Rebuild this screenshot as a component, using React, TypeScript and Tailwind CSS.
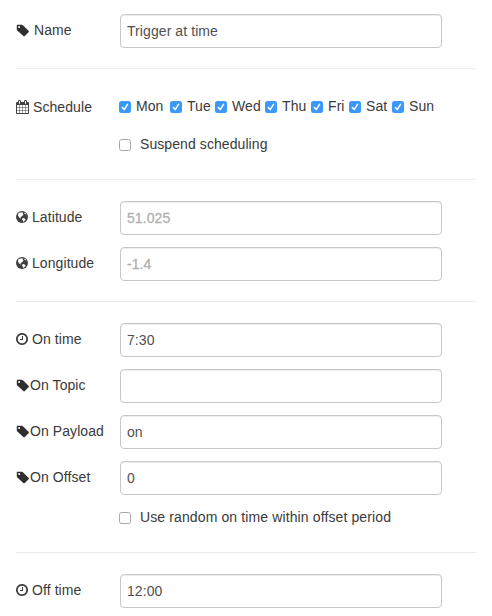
import type { ReactNode } from "react";

function TagIcon() {
  return (
    <svg viewBox="0 0 13 13" className="block h-[13px] w-[13px]" fill="#2f2f2f">
      <path fillRule="evenodd" d="M.8 1.2 1.2.8H6L6.9 1.2 12.8 7.1V8L8.6 12.3H7.6L1.3 6.6.8 5.8ZM3.1 2.1a1 1 0 1 0 0 2 1 1 0 0 0 0-2Z" />
    </svg>
  );
}

function CalendarIcon() {
  return (
    <svg viewBox="64 0 1664 1792" className="block h-[14px] w-[13px]" fill="#444">
      <path d="M192 1664h288v-288h-288v288zm352 0h320v-288h-320v288zm-352-352h288v-320h-288v320zm352 0h320v-320h-320v320zm-352-384h288v-288h-288v288zm736 736h320v-288h-320v288zm-384-736h320v-288h-320v288zm768 736h288v-288h-288v288zm-384-352h320v-320h-320v320zm-352-864v-288q0-13-9.5-22.5t-22.5-9.5h-64q-13 0-22.5 9.5t-9.5 22.5v288q0 13 9.5 22.5t22.5 9.5h64q13 0 22.5-9.5t9.5-22.5zm736 864h288v-320h-288v320zm-384-384h320v-288h-320v288zm384 0h288v-288h-288v288zm32-480v-288q0-13-9.5-22.5t-22.5-9.5h-64q-13 0-22.5 9.5t-9.5 22.5v288q0 13 9.5 22.5t22.5 9.5h64q13 0 22.5-9.5t9.5-22.5zm384-64v1280q0 52-38 90t-90 38h-1408q-52 0-90-38t-38-90v-1280q0-52 38-90t90-38h128v-96q0-66 47-113t113-47h64q66 0 113 47t47 113v96h384v-96q0-66 47-113t113-47h64q66 0 113 47t47 113v96h128q52 0 90 38t38 90z" />
    </svg>
  );
}

function GlobeIcon() {
  return (
    <svg viewBox="0 0 12 12" className="block h-3 w-3">
      <circle cx="6" cy="6" r="6" fill="#404040" />
      <path fill="#fff" d="M2.2 2.6 4 1.4 5.2 1.6 6.2 1.2 7.2 2 6.6 3 7.6 3.8 6.4 4.8 5.4 5.4 5 6.2 4.2 6.4 5 7.2 4.6 7.5 3.2 6.4 2 4.6ZM8.2 1.4 9.6 2.3 10.4 3.6 9.2 3.2 8.4 2.4ZM6.3 7.4 7.8 7.1 9.6 8.2 9 9.6 7.4 10.9 6.9 9.6 6 8.6Z" />
    </svg>
  );
}

function ClockIcon() {
  return (
    <svg viewBox="128 128 1536 1536" className="block h-3 w-3" fill="#3a3a3a">
      <path d="M1024 544v448q0 14-9 23t-23 9h-320q-14 0-23-9t-9-23v-64q0-14 9-23t23-9h224v-352q0-14 9-23t23-9h64q14 0 23 9t9 23zm416 352q0-148-73-273t-198-198-273-73-273 73-198 198-73 273 73 273 198 198 273 73 273-73 198-198 73-273zm224 0q0 209-103 385.5t-279.5 279.5-385.5 103-385.5-103-279.5-279.5-103-385.5 103-385.5 279.5-279.5 385.5-103 385.5 103 279.5 279.5 103 385.5z" />
    </svg>
  );
}

function Checkbox({ checked = false }: { checked?: boolean }) {
  return checked ? (
    <span className="flex h-3 w-3 shrink-0 items-center justify-center rounded-[2.5px] bg-[#3b99fc]">
      <svg viewBox="0 0 12 12" className="h-3 w-3" fill="none" stroke="#fff" strokeWidth="1.5" strokeLinecap="round" strokeLinejoin="round">
        <path d="M3.4 6.5 5.2 8.6 8.5 3.4" />
      </svg>
    </span>
  ) : (
    <span className="block h-3 w-3 shrink-0 rounded-[2.5px] border border-[#a8a8a8] bg-white" />
  );
}

function Row({ icon, label, gap, children }: { icon: ReactNode; label: string; gap: string; children: ReactNode }) {
  return (
    <div className="flex h-[34px]">
      <div className={`flex h-8 w-[104px] shrink-0 items-center whitespace-nowrap ${gap}`}>
        {icon}
        <span>{label}</span>
      </div>
      {children}
    </div>
  );
}

function Field({ value, placeholder }: { value?: string; placeholder?: string }) {
  return (
    <div className="flex h-[34px] w-[322px] items-center rounded-[4px] border border-[#c8c8c8] bg-white px-1.5 pb-px text-[#505050] shadow-[inset_0_1px_1px_rgba(0,0,0,0.075)]">
      {placeholder ? <span className="text-[#b0b0b0] [-webkit-text-stroke:0.3px_#b0b0b0]">{placeholder}</span> : value}
    </div>
  );
}

const Divider = () => <div className="h-px w-[460px] bg-[#ebebeb]" />;

const days = [
  { name: "Mon", width: "w-[51px]" },
  { name: "Tue", width: "w-[45px]" },
  { name: "Wed", width: "w-[50px]" },
  { name: "Thu", width: "w-[46px]" },
  { name: "Fri", width: "w-[38px]" },
  { name: "Sat", width: "w-[43px]" },
  { name: "Sun", width: "w-[46px]" },
];

export default function App() {
  return (
    <div className="h-[616px] w-[492px] overflow-hidden bg-white pl-4 pt-[14px] font-['Liberation_Sans',Arial,sans-serif] text-[14px] leading-5 tracking-[0.08px] text-[#3a3a3a]">
      <Row icon={<TagIcon />} label="Name" gap="gap-[5px]">
        <Field value="Trigger at time" />
      </Row>
      <div className="h-5" />
      <Divider />
      <div className="flex h-[54px] pt-[22px]">
        <div className="flex h-8 w-[103px] items-center gap-1">
          <CalendarIcon />
          <span>Schedule</span>
        </div>
        <div className="flex h-8 items-center">
          {days.map((day) => (
            <label key={day.name} className={`flex items-center gap-[5px] ${day.width}`}>
              <Checkbox checked />
              <span className="-mt-0.5">{day.name}</span>
            </label>
          ))}
        </div>
      </div>
      <div className="flex h-14 items-start gap-[9px] pl-[103px] pt-[11px]">
        <span className="pt-[5px]"><Checkbox /></span>
        <span>Suspend scheduling</span>
      </div>
      <Divider />
      <div className="flex flex-col gap-3 pb-5 pt-[21px]">
        <Row icon={<GlobeIcon />} label="Latitude" gap="gap-1">
          <Field placeholder="51.025" />
        </Row>
        <Row icon={<GlobeIcon />} label="Longitude" gap="gap-1">
          <Field placeholder="-1.4" />
        </Row>
      </div>
      <Divider />
      <div className="flex flex-col gap-3 pt-[21px]">
        <Row icon={<ClockIcon />} label="On time" gap="gap-1">
          <Field value="7:30" />
        </Row>
        <Row icon={<TagIcon />} label="On Topic" gap="gap-px">
          <Field />
        </Row>
        <Row icon={<TagIcon />} label="On Payload" gap="gap-px">
          <Field value="on" />
        </Row>
        <Row icon={<TagIcon />} label="On Offset" gap="gap-px">
          <Field value="0" />
        </Row>
      </div>
      <div className="flex h-[57px] items-start gap-[9px] pl-[103px] pt-[12px]">
        <span className="pt-[5px]"><Checkbox /></span>
        <span className="tracking-[0.12px]">Use random on time within offset period</span>
      </div>
      <Divider />
      <div className="pt-[21px]">
        <Row icon={<ClockIcon />} label="Off time" gap="gap-1">
          <Field value="12:00" />
        </Row>
      </div>
    </div>
  );
}
